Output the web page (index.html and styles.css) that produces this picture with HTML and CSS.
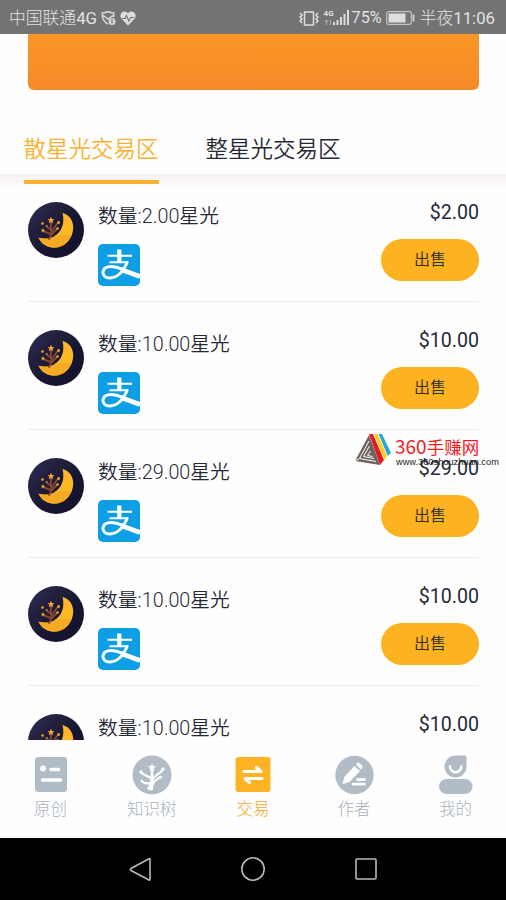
FILE: index.html
```html
<!DOCTYPE html>
<html lang="zh-CN">
<head>
<meta charset="utf-8">
<meta name="viewport" content="width=device-width, initial-scale=1">
<title>交易</title>
<link rel="stylesheet" href="styles.css">
</head>
<body>
<svg class="defs" aria-hidden="true">
  <defs>
    <linearGradient id="night" x1="0" y1="0" x2="1" y2="1"><stop offset="0" stop-color="#2d2d50"/><stop offset=".6" stop-color="#171630"/><stop offset="1" stop-color="#11112a"/></linearGradient>
    <clipPath id="crescent"><path d="M34.500 11C46 14 48.500 28 41 38C33 49 16 48 10.500 35.500C15 37 21 37 26 34.500C34 30 37 21 34.500 11Z"/></clipPath>
  </defs>
  <symbol id="moon" viewBox="0 0 56 56">
    <circle cx="28" cy="28" r="28" fill="url(#night)"/>
    <path d="M34.500 11C46 14 48.500 28 41 38C33 49 16 48 10.500 35.500C15 37 21 37 26 34.500C34 30 37 21 34.500 11Z" fill="#fdb827"/>
    <path clip-path="url(#crescent)" d="M8 35C22 40 31 31 40 33C41 34 43 33 48 33V50H8Z" fill="#f6a922"/>
    <path d="M21 37C24.500 32 22.500 28 23 20M22.500 32L15 29M23 33L29 27M23 28L18 24M24 29L29 22" fill="none" stroke="#85452f" stroke-width="1.900" stroke-linecap="round"/>
    <path d="M23 14.800l1 2.200 2.400.2-1.800 1.600.5 2.400-2.100-1.200-2.100 1.200.5-2.400-1.800-1.600 2.400-.2Z" fill="#f6a51f"/>
    <g fill="#efa227"><circle cx="14.500" cy="21.500" r="1.300"/><circle cx="15" cy="28.500" r="1.400"/><circle cx="30.500" cy="20.500" r="1.500"/><circle cx="29.500" cy="26.500" r="1.300"/><circle cx="19" cy="24" r=".8"/></g>
  </symbol>
  <symbol id="pay" viewBox="0 0 42 42">
    <rect width="42" height="42" rx="5" fill="#0c9fe6"/>
    <g fill="none" stroke="#fff">
      <path d="M21.300 5.500V18" stroke-width="4.200"/>
      <path d="M9.500 11.800H34M11.500 18.300H29" stroke-width="2.100"/>
      <path d="M29.500 17.300C26 27 19.500 34 12 34C7.500 34 5 31.500 5 28.500C5 24.500 8.500 22.500 13 22.500C20 22.500 28 27 42 31.500" stroke-width="2.900"/>
      <path d="M25 26.500L42 32.700" stroke-width="4.400"/>
    </g>
  </symbol>
</svg>

<header class="status">
  <span class="carrier">中国联通<b>4G</b></span>
  <svg class="shield" viewBox="0 0 15 16"><path d="M7 1.500C5 2.600 3 3 1.200 3C1 8.500 2.500 12 7 14M7 1.500C9 2.600 11 3 12.800 3V7M1.500 5L7 9L12.500 5" fill="none" stroke="#d6d6d6" stroke-width="1.500"/><circle cx="11" cy="11.500" r="3.500" fill="#d6d6d6"/><path d="M11 9.300v4.300" stroke="#737373" stroke-width="1.200"/></svg>
  <svg class="heart" viewBox="0 0 16 15"><path d="M8 14.500L1.300 7.500C-2 3 4-2.500 8 2.200C12-2.500 18 3 14.700 7.500Z" fill="#dedede"/><path d="M2 7.500H5L6.500 4.500L8.800 10L10.700 6.500H14" fill="none" stroke="#737373" stroke-width="1.100"/></svg>
  <span class="spacer"></span>
  <svg class="vibrate" viewBox="0 0 20 15"><path d="M5.500 1h9v13h-9zM1 2l2 2-2 2 2 2-2 2 2 2M19 2l-2 2 2 2-2 2 2 2-2 2" fill="none" stroke="#e0e0e0" stroke-width="1.500"/></svg>
  <div class="cell"><span class="net">4G</span><svg class="bars" viewBox="0 0 26 15"><path d="M2.500 10v5M.7 12l1.800-2 1.800 2M6.500 10v5" fill="none" stroke="#aaa" stroke-width="1"/><path d="M9 12h2v3H9zM12.500 10h2v5h-2zM16 7h2v8h-2zM19.500 4h2v11h-2zM23 0h2v15h-2z" fill="#dcdcdc"/></svg></div>
  <span class="percent"><b>75%</b></span>
  <svg class="battery" viewBox="0 0 29 14"><rect x=".7" y=".7" width="24.600" height="12.600" rx="2" fill="none" stroke="#c4c4c4" stroke-width="1.200"/><path d="M2.500 2.500h17v9h-17z" fill="#dedede"/><path d="M27.500 3.500v7" stroke="#d6d6d6" stroke-width="1.800"/></svg>
  <span class="clock">半夜<b>11:06</b></span>
</header>

<main class="content">
  <div class="banner"></div>
  <nav class="tabs"><a class="tab active">散星光交易区</a><a class="tab">整星光交易区</a></nav>
  <section class="list">
    <article class="row"><svg class="avatar"><use href="#moon"/></svg><div class="info"><span class="amount">数量:2.00星光</span><svg class="pay"><use href="#pay"/></svg></div><div class="offer"><span class="price">$2.00</span><button class="sell">出售</button></div></article>
    <article class="row"><svg class="avatar"><use href="#moon"/></svg><div class="info"><span class="amount">数量:10.00星光</span><svg class="pay"><use href="#pay"/></svg></div><div class="offer"><span class="price">$10.00</span><button class="sell">出售</button></div></article>
    <article class="row"><svg class="avatar"><use href="#moon"/></svg><div class="info"><span class="amount">数量:29.00星光</span><svg class="pay"><use href="#pay"/></svg></div><div class="offer"><span class="price">$29.00</span><button class="sell">出售</button></div></article>
    <article class="row"><svg class="avatar"><use href="#moon"/></svg><div class="info"><span class="amount">数量:10.00星光</span><svg class="pay"><use href="#pay"/></svg></div><div class="offer"><span class="price">$10.00</span><button class="sell">出售</button></div></article>
    <article class="row last"><svg class="avatar"><use href="#moon"/></svg><div class="info"><span class="amount">数量:10.00星光</span></div><div class="offer"><span class="price">$10.00</span></div></article>
  </section>
</main>

<aside class="watermark">
  <svg class="mark" viewBox="0 0 36 32">
    <path d="M14 1L0 27L25 31Z" fill="#6e6460"/>
    <path d="M14 7L4.500 24.500L21 27.500M14.500 12L8.500 22.500L19 24.500M15.500 17L12.500 21.500L17.500 22.500M0 27L4.500 24.500" fill="none" stroke="#fff" stroke-width="1"/>
    <path d="M14 0H18L29 26L25 31Z" fill="#e01b28"/><path d="M19 0H22.500L32 22L29.500 26Z" fill="#ffce19"/><path d="M23.500 0H27L36 19L32.800 22Z" fill="#25a9d9"/>
  </svg>
  <div class="brand"><span class="brand-name"><span class="brand-number">360</span>手赚网</span><span class="brand-url">www.360shouzhuan.com</span></div>
</aside>

<footer class="menu">
  <a class="item"><svg viewBox="0 0 40 40"><rect x="4" y="2" width="32" height="35" rx="3" fill="#b1bcc6"/><circle cx="12" cy="13.500" r="2.900" fill="#fff"/><path d="M20 14.500h7.500M11.500 25h18" stroke="#fff" stroke-width="3.600" stroke-linecap="round"/></svg><span>原创</span></a>
  <a class="item"><svg viewBox="0 0 40 40"><circle cx="20" cy="20" r="19.500" fill="#b1bcc6"/><path d="M15 34C18 30 18.500 26 19 13h2.200C21 19 22 25 21 35Q18 36 15 34Z" fill="#fff"/><path d="M18.500 28C14 29 11 28 9.500 25.500M19 23C16 21 13 21 9 17.500M21 29C22 25 25 25 28 22M21 24C22.500 20 29 19 31 14" fill="none" stroke="#fff" stroke-width="2.100" stroke-linecap="round"/><path d="M20 8.500l1.200 2.400 2.700.4-2 1.900.5 2.700-2.400-1.300-2.400 1.300.5-2.700-2-1.900 2.700-.4Z" fill="#fff"/><g fill="#fff"><circle cx="9" cy="17" r="1.700"/><circle cx="31" cy="14" r="1.800"/><circle cx="28.500" cy="22" r="1.600"/></g></svg><span>知识树</span></a>
  <a class="item current"><svg viewBox="0 0 40 40"><rect x="2.500" y="2" width="35" height="35" rx="3" fill="#fdb323"/><path d="M11 16.500H28L23.500 12.500M29 23.500H12L16.500 27.500" fill="none" stroke="#fff" stroke-width="3.200" stroke-linecap="round" stroke-linejoin="round"/></svg><span>交易</span></a>
  <a class="item"><svg viewBox="0 0 40 40"><circle cx="20.500" cy="20" r="19.200" fill="#b1bcc6"/><path d="M8.500 29L10.500 21.500L20.500 11L26 16L15.500 27ZM22 9.500L23.500 8Q24.500 7 26 8.500L28 10.500Q29 11.500 28 13L27 14.500Z" fill="#fff"/><path d="M23.500 24.500h7M19 29.200h11.500" stroke="#fff" stroke-width="2.800" stroke-linecap="round"/></svg><span>作者</span></a>
  <a class="item"><svg viewBox="0 0 40 40"><path d="M20.500 .5H30Q31.500 .5 31.500 2V11.500A11 11 0 1 1 20.500 .5Z" fill="#b1bcc6"/><path d="M15 11.500C15.500 19 25.500 19 26.300 11.500" fill="none" stroke="#fff" stroke-width="2.500" stroke-linecap="round"/><rect x="4" y="24" width="33.500" height="15" rx="7.500" fill="#b1bcc6"/></svg><span>我的</span></a>
</footer>

<div class="system">
  <svg viewBox="0 0 26 26"><path d="M22 3.500V23.500Q22 24.500 21 24L3 14.500Q1.500 13.500 3 12.500L21 2.700Q22 2.300 22 3.500Z"/></svg>
  <svg viewBox="0 0 26 26"><circle cx="13" cy="13" r="11.200"/></svg>
  <svg viewBox="0 0 26 26"><rect x="3" y="3" width="20" height="20" rx="1"/></svg>
</div>
</body>
</html>
```
FILE: styles.css
```css
* { box-sizing: border-box; }
body {
  margin: 0;
  width: 506px;
  height: 900px;
  position: relative;
  display: flex;
  flex-direction: column;
  overflow: hidden;
  background: #fefefe;
  color: #262a35;
  font-family: Roboto, "Noto Sans CJK SC", sans-serif;
  font-weight: 300;
}
b { font-weight: 400; }
svg { display: block; flex: none; }
.defs { position: absolute; width: 0; height: 0; }

.status {
  height: 34px;
  flex: none;
  display: flex;
  align-items: center;
  padding: 2px 11px 0 9px;
  background: #737373;
  color: #e2e2e2;
  font-size: 16.8px;
  line-height: 24px;
  white-space: nowrap;
}
.shield { width: 15px; height: 16px; margin-left: 4px; }
.heart { width: 16px; height: 15px; margin-left: 4px; }
.spacer { flex: 1; }
.vibrate { width: 20px; height: 15px; margin-right: 5px; }
.cell { display: grid; width: 26px; height: 16px; margin-right: 2px; }
.net, .bars { grid-area: 1 / 1; }
.net { font-size: 8px; line-height: 8px; font-weight: 700; }
.bars { width: 26px; height: 15px; }
.percent { font-size: 16.2px; }
.battery { width: 29px; height: 14px; margin: 0 5px 0 4px; }

.content { height: 706px; flex: none; overflow: hidden; }
.banner {
  height: 56px;
  margin: 0 27px 0 28px;
  border-radius: 0 0 6px 6px;
  background: linear-gradient(#fa9627, #f68a28);
}
.tabs {
  height: 84px;
  padding: 39px 23.5px 0;
  display: flex;
  gap: 47px;
  font-size: 22.5px;
  line-height: 40px;
  font-weight: 350;
}
.tab { height: 55px; position: relative; white-space: nowrap; }
.active { color: #f9b12e; border-bottom: 4px solid #fbb12f; }
.list { background: linear-gradient(#f7f2f2, #faf6f6 7px, #fefefe 14px); }
.row {
  height: 128px;
  margin: 0 27px 0 28px;
  padding-top: 28px;
  display: flex;
  border-bottom: 1px solid #ececec;
}
.last { height: 66px; border-bottom: 0; }
.avatar { width: 56px; height: 56px; }
.info { margin-left: 14px; flex: 1; }
.amount { display: block; font-size: 19.8px; line-height: 30px; margin-bottom: 12px; white-space: nowrap; font-weight: 350; }
.pay { width: 42px; height: 42px; }
.offer { display: flex; flex-direction: column; align-items: flex-end; }
.price { font-size: 19.6px; line-height: 22px; margin: 0 0 15px; font-weight: 400; }
.sell {
  width: 98px;
  height: 42px;
  padding: 0;
  border: 0;
  border-radius: 21px;
  background: #fdb320;
  color: #2e2c2c;
  font: inherit;
  font-weight: 350;
  font-size: 16px;
  line-height: 40px;
}

.watermark { position: absolute; left: 355px; top: 434px; display: flex; }
.mark { width: 36px; height: 32px; }
.brand { display: flex; flex-direction: column; margin-left: 4px; white-space: nowrap; }
.brand-name { color: #f51c1f; font-family: "Noto Sans CJK SC", sans-serif; font-size: 17.5px; line-height: 24px; font-weight: 400; }
.brand-number { font-size: 19px; }
.brand-url { color: #222; font-family: "Liberation Sans", sans-serif; font-size: 9.25px; line-height: 6px; font-weight: 400; margin-left: 1px; }

.menu { height: 98px; flex: none; display: flex; padding-top: 15px; background: #fefefe; }
.item {
  flex: 1;
  display: flex;
  flex-direction: column;
  align-items: center;
  font-size: 16.5px;
  line-height: 24px;
  color: #aab2bd;
}
.item svg { width: 40px; height: 40px; margin-bottom: 3px; }
.current { color: #f7a61c; }

.system {
  height: 62px;
  flex: none;
  display: flex;
  justify-content: center;
  align-items: center;
  gap: 86.5px;
  background: #000;
}
.system svg { width: 26px; height: 26px; fill: none; stroke: #b9b9b9; stroke-width: 1.6; }
```
